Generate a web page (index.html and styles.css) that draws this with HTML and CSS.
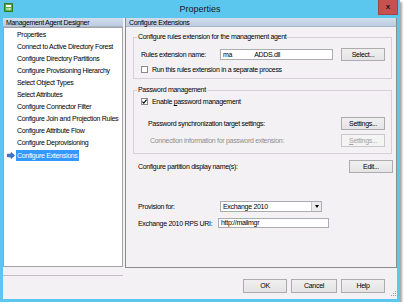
FILE: index.html
```html
<!DOCTYPE html>
<html lang="en">
<head>
    <meta charset="UTF-8">
    <title>Properties</title>
    <link rel="stylesheet" href="styles.css">
</head>
<body>
    <div class="window">
        <div class="titlebar">
            <span class="app-icon">
                <svg width="9" height="9" viewBox="0 0 9 9">
                    <rect x="0.5" y="0.5" width="8" height="8" fill="#52b043" stroke="#2f7d2a"/>
                    <rect x="2" y="2" width="5" height="2" fill="#fff"/>
                    <path d="M2 5.5h3.5v-1l1.5 1.5-1.5 1.5v-1H2z" fill="#fff"/>
                </svg>
            </span>
            <span class="title">Properties</span>
            <span class="close">x</span>
        </div>
        <div class="client">
            <div class="panes">
                <div class="nav">
                    <div class="pane-head">Management Agent Designer</div>
                    <ul class="nav-list">
                        <li>Properties</li>
                        <li>Connect to Active Directory Forest</li>
                        <li>Configure Directory Partitions</li>
                        <li>Configure Provisioning Hierarchy</li>
                        <li>Select Object Types</li>
                        <li>Select Attributes</li>
                        <li>Configure Connector Filter</li>
                        <li>Configure Join and Projection Rules</li>
                        <li>Configure Attribute Flow</li>
                        <li>Configure Deprovisioning</li>
                        <li class="current">
                            <svg class="arrow" width="8" height="7" viewBox="0 0 8 7">
                                <path d="M0.5 2.2h3.6V0.6L7.5 3.5 4.1 6.4V4.8H0.5z" fill="#3a78d8" stroke="#1d4a9c" stroke-width="0.7"/>
                            </svg>
                            <span>Configure Extensions</span>
                        </li>
                    </ul>
                </div>
                <div class="page">
                    <div class="pane-head">Configure Extensions</div>
                    <div class="page-body">
                        <fieldset class="group">
                            <legend>Configure rules extension for the management agent</legend>
                            <div class="field-row">
                                <span class="label label-rules">Rules extension name:</span>
                                <span class="text-field rules-field">ma<span class="gap"></span>ADDS.dll</span>
                                <span class="btn">Select...</span>
                            </div>
                            <div class="check-row">
                                <span class="box"></span>
                                <span>Run this rules extension in a separate process</span>
                            </div>
                        </fieldset>

                        <fieldset class="group group-password">
                            <legend>Password management</legend>
                            <div class="check-row">
                                <span class="box">
                                    <svg width="5" height="5" viewBox="0 0 5 5">
                                        <path d="M0.4 2.6l1.4 1.5L4.6 0.6" fill="none" stroke="#000" stroke-width="1.1"/>
                                    </svg>
                                </span>
                                <span>Enable <u>p</u>assword management</span>
                            </div>
                            <div class="field-row sub-row sync-row">
                                <span>Password synchronization target settings:</span>
                                <span class="btn">Settings...</span>
                            </div>
                            <div class="field-row sub-row conn-row">
                                <span class="disabled-text">Connection information for password extension:</span>
                                <span class="btn btn-disabled"><u>S</u>ettings...</span>
                            </div>
                        </fieldset>

                        <div class="field-row plain-row edit-row">
                            <span>Configure partition display name(s):</span>
                            <span class="btn btn-edit">Edit...</span>
                        </div>

                        <div class="field-row plain-row provision-row">
                            <span class="label label-provision">Provision for:</span>
                            <span class="select">
                                <span class="select-text">Exchange 2010</span>
                                <span class="drop"><span class="tri"></span></span>
                            </span>
                        </div>

                        <div class="field-row plain-row uri-row">
                            <span class="label label-uri">Exchange 2010 RPS URI:</span>
                            <span class="text-field uri-field">http://mailmgr</span>
                        </div>
                    </div>
                </div>
            </div>
            <div class="footer">
                <span class="btn btn-footer">OK</span>
                <span class="btn btn-footer btn-cancel">Cancel</span>
                <span class="btn btn-footer">Help</span>
                <svg class="grip" width="7" height="9" viewBox="0 0 7 9">
                    <g fill="#9a9a9a">
                        <rect x="5" y="2" width="1" height="1"/>
                        <rect x="3" y="4" width="1" height="1"/>
                        <rect x="5" y="4" width="1" height="1"/>
                        <rect x="1" y="6" width="1" height="1"/>
                        <rect x="3" y="6" width="1" height="1"/>
                        <rect x="5" y="6" width="1" height="1"/>
                    </g>
                </svg>
            </div>
        </div>
    </div>
</body>
</html>
```

FILE: styles.css
```css
* {
    margin: 0;
    padding: 0;
    box-sizing: border-box;
}
body {
    background: #fff;
    font-family: "Liberation Sans", Arial, sans-serif;
    font-size: 7px;
    letter-spacing: -0.3px;
    color: #000;
}
ul {
    list-style: none;
}
.window {
    width: 400px;
    height: 302px;
    background: #5bc7ee;
    padding: 0 3px 3px;
    display: flex;
    flex-direction: column;
    box-shadow: 2px 2px 2px rgba(0, 0, 0, 0.35);
}
.titlebar {
    height: 18px;
    display: grid;
    grid-template-columns: 1fr auto 1fr;
    align-items: start;
}
.app-icon {
    margin: 3px 0 0 1px;
    height: 9px;
}
.app-icon svg {
    display: block;
}
.title {
    font-size: 9px;
    letter-spacing: 0;
    line-height: 19px;
    color: #1b1b1b;
}
.close {
    justify-self: end;
    margin-right: -1px;
    width: 20px;
    height: 15px;
    background: #c75050;
    border: 1px solid #a84343;
    border-top: 0;
    font-size: 8px;
    font-weight: bold;
    letter-spacing: 0;
    line-height: 14px;
    text-align: center;
    color: #1a1a1a;
}
.client {
    flex: 1;
    background: #f4f1f4;
    display: flex;
    flex-direction: column;
}
.panes {
    display: flex;
    gap: 2px;
    align-items: flex-start;
}
.pane-head {
    height: 9px;
    line-height: 9px;
    padding-left: 3px;
    background: linear-gradient(#d1ddec, #bccbe0);
    border-bottom: 1px solid #a6b6cb;
    white-space: nowrap;
}
.nav {
    width: 120px;
    padding-bottom: 8px;
    border-bottom: 1px solid #c4bec4;
}
.nav-list {
    height: 240px;
    background: #fff;
    border: 1px solid #a3a3a3;
    padding-top: 1px;
}
.nav-list li {
    height: 12px;
    line-height: 12px;
    padding-left: 13px;
    white-space: nowrap;
}
.nav-list li.current {
    display: flex;
    align-items: center;
    padding-left: 3px;
}
.arrow {
    display: block;
    margin-right: 1px;
}
.nav-list li.current span {
    background: #3399ff;
    color: #fff;
    line-height: 11px;
    padding: 0 1px;
}
.page {
    flex: 1;
    height: 250px;
    border: 1px solid #8c8c8c;
    border-top: 0;
}
.page-body {
    padding: 6px 4px 0 7px;
}
.group {
    border: 1px solid #d6d1d6;
    padding: 7px 6px 5px 7px;
}
.group legend {
    margin-left: -4px;
    padding: 0 1px;
    line-height: 8px;
}
.group-password {
    margin-top: 7px;
    padding-top: 4px;
    padding-bottom: 6px;
}
.field-row {
    display: flex;
    align-items: center;
    height: 13px;
    white-space: nowrap;
}
.label-rules {
    width: 79px;
}
.text-field {
    height: 11px;
    line-height: 9px;
    padding-left: 2px;
    background: #fff;
    border: 1px solid #abadb3;
    white-space: pre;
}
.rules-field {
    width: 113px;
}
.gap {
    display: inline-block;
    width: 22px;
}
.btn {
    display: block;
    width: 44px;
    height: 13px;
    line-height: 11px;
    margin-left: auto;
    text-align: center;
    background: linear-gradient(#f0f0f0, #e4e4e4);
    border: 1px solid #acacac;
}
.btn-disabled {
    color: #a3a3a3;
    background: #f4f4f4;
    border-color: #c9c9c9;
}
.disabled-text {
    color: #8d8d8d;
    padding-left: 2px;
}
.check-row {
    display: flex;
    align-items: center;
    height: 7px;
    margin-top: 5px;
    white-space: nowrap;
}
.group-password .check-row {
    margin-top: 0;
}
.box {
    width: 7px;
    height: 7px;
    margin-right: 4px;
    background: #fff;
    border: 1px solid #8a8a8a;
}
.box svg {
    display: block;
}
.sub-row {
    padding-left: 7px;
}
.sync-row {
    margin-top: 12px;
}
.conn-row {
    margin-top: 4px;
}
.plain-row {
    padding-left: 5px;
}
.edit-row {
    margin-top: 6px;
}
.btn-edit {
    margin-right: -1px;
}
.provision-row {
    margin-top: 28px;
    height: 11px;
}
.label-provision {
    width: 82px;
}
.select {
    display: flex;
    width: 102px;
    height: 11px;
    background: #fff;
    border: 1px solid #abadb3;
}
.select-text {
    flex: 1;
    line-height: 9px;
    padding-left: 2px;
}
.drop {
    width: 10px;
    display: flex;
    align-items: center;
    justify-content: center;
    background: #ececec;
    border-left: 1px solid #c6c6c6;
}
.tri {
    border-left: 2.5px solid transparent;
    border-right: 2.5px solid transparent;
    border-top: 3px solid #000;
}
.uri-row {
    margin-top: 6px;
    height: 10px;
}
.label-uri {
    width: 80px;
}
.uri-field {
    width: 111px;
    height: 10px;
    line-height: 8px;
}
.footer {
    flex: 1;
    display: flex;
    justify-content: flex-end;
    align-items: flex-start;
    gap: 4px;
    padding-top: 3px;
}
.btn-footer {
    margin-left: 0;
    height: 14px;
    line-height: 12px;
}
.btn-cancel {
    width: 46px;
}
.grip {
    align-self: flex-end;
    margin: 0 0 1px 1px;
}
```
